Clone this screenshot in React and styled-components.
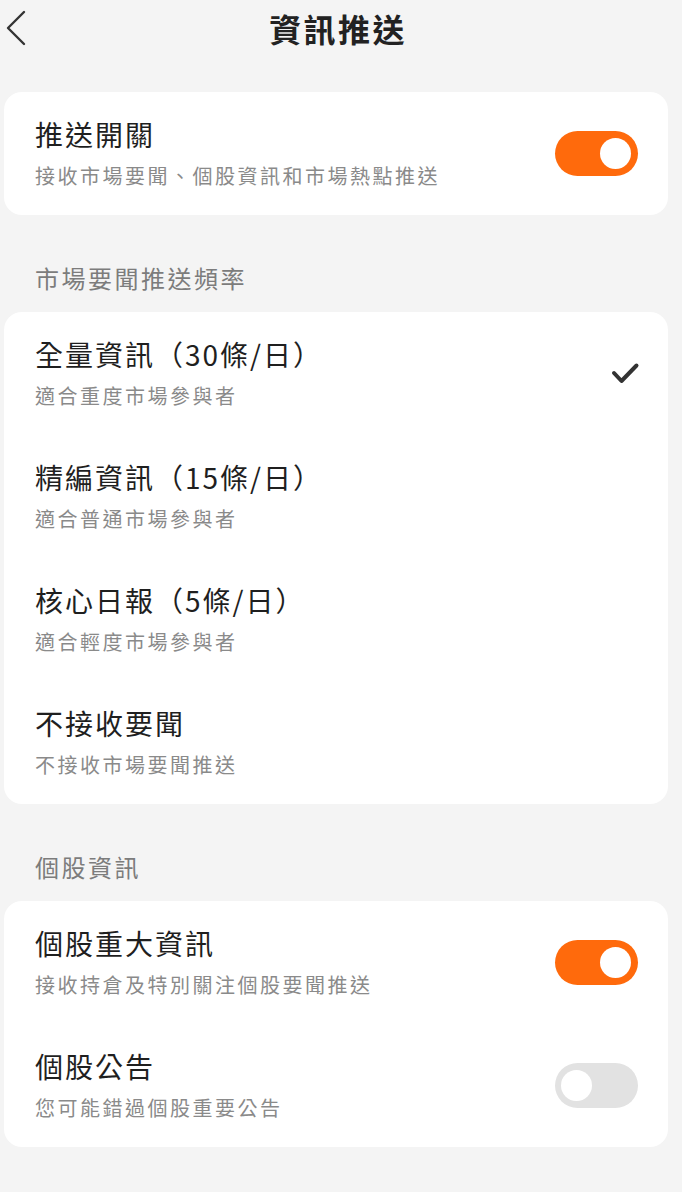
import React from "react";
import styled, { createGlobalStyle } from "styled-components";

const GlobalStyle = createGlobalStyle`
  html, body {
    margin: 0;
    padding: 0;
    background: #f4f4f4;
  }
  body {
    font-family: "Noto Sans CJK TC", "Noto Sans", sans-serif;
  }
`;

const Page = styled.div`
  width: 682px;
  min-height: 1192px;
  box-sizing: border-box;
  padding: 0 14px 40px 4px;
  background: #f4f4f4;
`;

const Header = styled.div`
  position: relative;
  height: 56px;
  display: flex;
  align-items: center;
  justify-content: center;
  margin-bottom: 36px;
`;

const BackButton = styled.button`
  position: absolute;
  left: -3px;
  top: 9px;
  width: 30px;
  height: 38px;
  padding: 0;
  border: 0;
  background: none;
  display: flex;
  align-items: center;
  justify-content: center;
`;

const HeaderTitle = styled.h1`
  margin: 0 0 0 4px;
  font-size: 32px;
  line-height: 40px;
  font-weight: 700;
  letter-spacing: 2.4px;
  color: #222;
`;

const SectionLabel = styled.div`
  margin: 46px 0 17px 31px;
  font-size: 24px;
  line-height: 34px;
  letter-spacing: 2.5px;
  color: #7c7c7c;
`;

const Card = styled.div`
  background: #fff;
  border-radius: 18px;
  overflow: hidden;
`;

const Row = styled.div`
  height: 123px;
  box-sizing: border-box;
  display: flex;
  align-items: center;
  justify-content: space-between;
  padding: 0 30px 0 31px;
`;

const Texts = styled.div`
  display: flex;
  flex-direction: column;
  gap: 11px;
`;

const Title = styled.div`
  font-size: 28px;
  line-height: 34px;
  letter-spacing: 2px;
  color: #1f1f1f;
`;

const Sub = styled.div`
  font-size: 20px;
  line-height: 28px;
  letter-spacing: 2.5px;
  color: #8a8a8a;
`;

const Toggle = styled.div`
  position: relative;
  width: 83px;
  height: 45px;
  border-radius: 23px;
  flex-shrink: 0;
  background: ${p => (p.$on ? "#ff6a0c" : "#e2e2e2")};
`;

const Knob = styled.div`
  position: absolute;
  top: 7px;
  ${p => (p.$on ? "right: 7px;" : "left: 6px;")}
  width: 31px;
  height: 31px;
  border-radius: 50%;
  background: #fff;
`;

const Check = styled.svg`
  width: 30px;
  height: 24px;
  margin-right: -2px;
  flex-shrink: 0;
`;

const frequencies = [
  { title: "全量資訊（30條/日）", sub: "適合重度市場參與者", selected: true },
  { title: "精編資訊（15條/日）", sub: "適合普通市場參與者" },
  { title: "核心日報（5條/日）", sub: "適合輕度市場參與者" },
  { title: "不接收要聞", sub: "不接收市場要聞推送" },
];

const stocks = [
  { title: "個股重大資訊", sub: "接收持倉及特別關注個股要聞推送", on: true },
  { title: "個股公告", sub: "您可能錯過個股重要公告", on: false },
];

const Switch = ({ on }) => (
  <Toggle $on={on}>
    <Knob $on={on} />
  </Toggle>
);

export default function App() {
  return (
    <Page>
      <GlobalStyle />
      <Header>
        <BackButton>
          <svg width="22" height="36" viewBox="0 0 22 36">
            <path
              d="M19 2 L3 18 L19 34"
              fill="none"
              stroke="#333"
              strokeWidth="2.4"
              strokeLinecap="round"
              strokeLinejoin="round"
            />
          </svg>
        </BackButton>
        <HeaderTitle>資訊推送</HeaderTitle>
      </Header>

      <Card>
        <Row>
          <Texts>
            <Title>推送開關</Title>
            <Sub>接收市場要聞、個股資訊和市場熱點推送</Sub>
          </Texts>
          <Switch on />
        </Row>
      </Card>

      <SectionLabel>市場要聞推送頻率</SectionLabel>
      <Card>
        {frequencies.map(f => (
          <Row key={f.title}>
            <Texts>
              <Title>{f.title}</Title>
              <Sub>{f.sub}</Sub>
            </Texts>
            {f.selected && (
              <Check viewBox="0 0 30 24">
                <path
                  d="M4 11 L11.5 19 L26.5 3.5"
                  fill="none"
                  stroke="#333"
                  strokeWidth="4"
                  strokeLinecap="round"
                  strokeLinejoin="round"
                />
              </Check>
            )}
          </Row>
        ))}
      </Card>

      <SectionLabel>個股資訊</SectionLabel>
      <Card>
        {stocks.map(s => (
          <Row key={s.title}>
            <Texts>
              <Title>{s.title}</Title>
              <Sub>{s.sub}</Sub>
            </Texts>
            <Switch on={s.on} />
          </Row>
        ))}
      </Card>
    </Page>
  );
}
